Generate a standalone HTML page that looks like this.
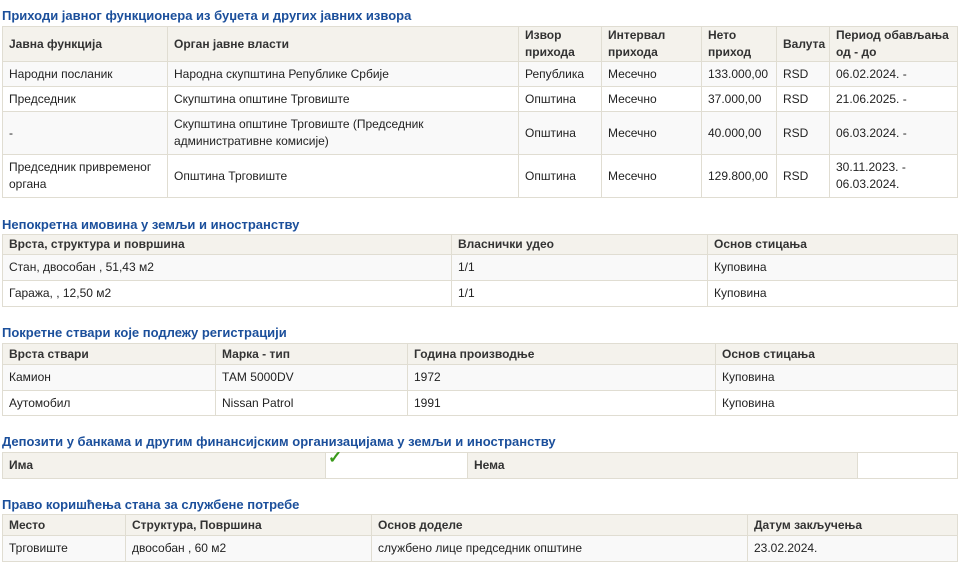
<!DOCTYPE html>
<html><head><meta charset="utf-8"><style>
body{margin:0;width:960px;height:560px;overflow:hidden;background:#fff;font-family:"Liberation Sans",Arial,sans-serif;font-size:12px;color:#222;position:relative}
h3{position:absolute;left:2px;margin:0;font-size:13px;font-weight:bold;color:#1b4f9b;white-space:nowrap}
table{position:absolute;left:2px;width:955px;border-collapse:collapse;table-layout:fixed}
td,th{border:1px solid #e0ddd2;padding:0 6px;text-align:left;vertical-align:middle;line-height:17px}
th{background:#f4f2ec;font-weight:bold;color:#333}
tr.a td{background:#f9f9f9}
td{background:#fff}
.g{background:#f4f2ec}
</style></head><body>
<h3 style="top:8px">Приходи јавног функционера из буџета и других јавних извора</h3>
<table style="top:26px">
<colgroup><col style="width:165px"><col style="width:351px"><col style="width:83px"><col style="width:100px"><col style="width:75px"><col style="width:53px"><col style="width:128px"></colgroup>
<tr style="height:34px"><th>Јавна функција</th><th>Орган јавне власти</th><th>Извор прихода</th><th>Интервал прихода</th><th>Нето приход</th><th>Валута</th><th>Период обављања од - до</th></tr>
<tr class="a" style="height:25px"><td>Народни посланик</td><td>Народна скупштина Републике Србије</td><td>Република</td><td>Месечно</td><td>133.000,00</td><td>RSD</td><td>06.02.2024. -</td></tr>
<tr style="height:25px"><td>Председник</td><td>Скупштина општине Трговиште</td><td>Општина</td><td>Месечно</td><td>37.000,00</td><td>RSD</td><td>21.06.2025. -</td></tr>
<tr class="a" style="height:43px"><td>-</td><td>Скупштина општине Трговиште (Председник административне комисије)</td><td>Општина</td><td>Месечно</td><td>40.000,00</td><td>RSD</td><td>06.03.2024. -</td></tr>
<tr style="height:43px"><td>Председник привременог органа</td><td>Општина Трговиште</td><td>Општина</td><td>Месечно</td><td>129.800,00</td><td>RSD</td><td>30.11.2023. - 06.03.2024.</td></tr>
</table>

<h3 style="top:217px">Непокретна имовина у земљи и иностранству</h3>
<table style="top:234px">
<colgroup><col style="width:449px"><col style="width:256px"><col style="width:250px"></colgroup>
<tr style="height:20px"><th>Врста, структура и површина</th><th>Власнички удео</th><th>Основ стицања</th></tr>
<tr class="a" style="height:26px"><td>Стан, двособан , 51,43 м2</td><td>1/1</td><td>Куповина</td></tr>
<tr style="height:26px"><td>Гаража, , 12,50 м2</td><td>1/1</td><td>Куповина</td></tr>
</table>

<h3 style="top:325px">Покретне ствари које подлежу регистрацији</h3>
<table style="top:343px">
<colgroup><col style="width:213px"><col style="width:192px"><col style="width:308px"><col style="width:242px"></colgroup>
<tr style="height:21px"><th>Врста ствари</th><th>Марка - тип</th><th>Година производње</th><th>Основ стицања</th></tr>
<tr class="a" style="height:26px"><td>Камион</td><td>ТАМ 5000DV</td><td>1972</td><td>Куповина</td></tr>
<tr style="height:25px"><td>Аутомобил</td><td>Nissan Patrol</td><td>1991</td><td>Куповина</td></tr>
</table>

<h3 style="top:434px">Депозити у банкама и другим финансијским организацијама у земљи и иностранству</h3>
<table style="top:452px">
<colgroup><col style="width:323px"><col style="width:142px"><col style="width:390px"><col style="width:100px"></colgroup>
<tr style="height:26px"><th>Има</th><td style="position:relative"><span style="position:absolute;left:2px;top:-4px;color:#3a9a1a;font-size:17px;font-weight:bold">✓</span></td><th>Нема</th><td></td></tr>
</table>

<h3 style="top:497px">Право коришћења стана за службене потребе</h3>
<table style="top:514px">
<colgroup><col style="width:123px"><col style="width:246px"><col style="width:376px"><col style="width:210px"></colgroup>
<tr style="height:21px"><th>Место</th><th>Структура, Површина</th><th>Основ доделе</th><th>Датум закључења</th></tr>
<tr class="a" style="height:26px"><td>Трговиште</td><td>двособан , 60 м2</td><td>службено лице председник општине</td><td>23.02.2024.</td></tr>
</table>
</body></html>
